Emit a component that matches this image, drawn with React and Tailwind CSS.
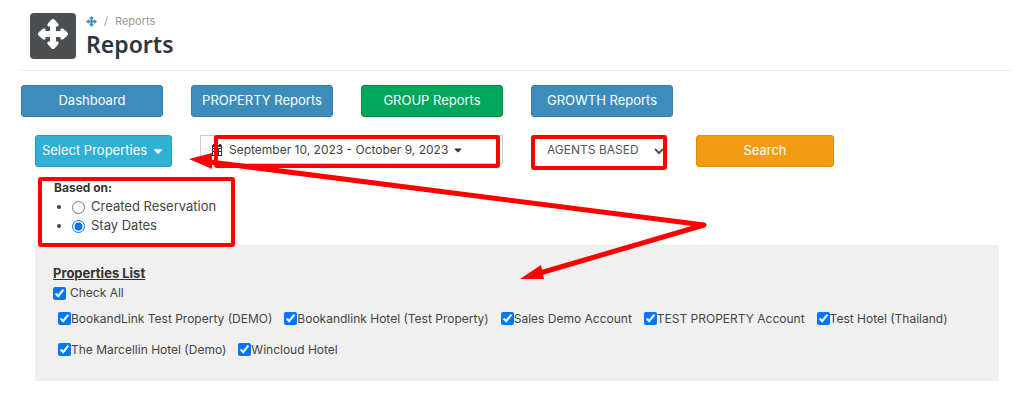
import React, { useState } from "react";
import { FaCaretDown } from "react-icons/fa";

const tabs = [
  { name: "Dashboard" },
  { name: "PROPERTY Reports" },
  { name: "GROUP Reports" },
  { name: "GROWTH Reports" },
];

const properties = [
  "BookandLink Test Property (DEMO)",
  "Bookandlink Hotel (Test Property)",
  "Sales Demo Account",
  "TEST PROPERTY Account",
  "Test Hotel (Thailand)",
  "The Marcellin Hotel (Demo)",
  "Wincloud Hotel",
];

const ArrowsIcon = ({ className }) => (
  <svg
    viewBox="0 0 32 32"
    className={className}
    fill="currentColor"
    stroke="currentColor"
    strokeWidth="1"
    strokeLinejoin="round"
    aria-hidden="true"
  >
    <path d="M15 1.5 H17 L21 6 V8 H18.5 V13.5 H24 V11 H26 L30.5 15 V17 L26 21 H24 V18.5 H18.5 V24 H21 V26 L17 30.5 H15 L11 26 V24 H13.5 V18.5 H8 V21 H6 L1.5 17 V15 L6 11 H8 V13.5 H13.5 V8 H11 V6 Z" />
  </svg>
);

const CalendarIcon = ({ className }) => (
  <svg
    viewBox="0 0 12 12"
    className={className}
    fill="currentColor"
    aria-hidden="true"
  >
    <path
      fillRule="evenodd"
      d="M2 0h2v1h4V0h2v1h1v11H1V1h1zM2 5v2h2V5zM5 5v2h2V5zM8 5v2h2V5zM2 8v3h2V8zM5 8v3h2V8zM8 8v3h2V8zM2 3v1h8V3z"
    />
  </svg>
);

const Header = () => (
  <header className="flex gap-2.5 border-b border-[#e8e8e8] px-[9px] pt-[13px] pb-[11px]">
    <div className="flex size-[46px] items-center justify-center rounded-sm bg-[#4b4f52]">
      <ArrowsIcon className="mb-1 size-8 text-white" />
    </div>
    <div>
      <nav className="flex h-4 items-center text-[11px] text-[#999]">
        <a href="#home" aria-label="Home" className="text-[#3c8dbc]">
          <ArrowsIcon className="size-[11px]" />
        </a>
        <span className="px-[7px]">/</span>
        <span>Reports</span>
      </nav>
      <h1 className="font-['Noto_Sans',sans-serif] text-[23px] leading-[30px] font-semibold text-[#2f353e]">
        Reports
      </h1>
    </div>
  </header>
);

const Annotations = () => (
  <svg
    className="pointer-events-none absolute top-0 left-0"
    width="1024"
    height="407"
    fill="none"
    stroke="#f00"
    strokeWidth="4"
    aria-hidden="true"
  >
    <rect x="216" y="137" width="282" height="29" rx="1" />
    <rect x="533" y="137" width="132" height="31" rx="1" />
    <rect x="40" y="179" width="193" height="66" rx="1" />
    <path
      d="M210 162 L704 225 L540 273"
      strokeWidth="5"
      strokeLinejoin="round"
    />
    <path d="M189 159 L212 153 V169 Z" fill="#f00" stroke="none" />
    <path d="M520 279 L541 265 L544 279 Z" fill="#f00" stroke="none" />
  </svg>
);

const App = () => {
  const [active, setActive] = useState("GROUP Reports");
  const [basedOn, setBasedOn] = useState("stay");
  const [checked, setChecked] = useState(properties);

  const allChecked = checked.length === properties.length;

  const toggle = (name) => {
    setChecked(
      checked.includes(name)
        ? checked.filter((item) => item !== name)
        : [...checked, name]
    );
  };

  return (
    <div className="relative bg-white pr-[11px] pl-[21px] font-[Inter,sans-serif] text-[13px] text-[#444]">
      <Header />

      {/* Report tabs */}
      <div className="mt-3.5 flex flex-wrap gap-7">
        {tabs.map((tab) => (
          <button
            key={tab.name}
            onClick={() => setActive(tab.name)}
            className={`h-8 w-[142px] rounded-[3px] border text-[13px] whitespace-nowrap text-white ${
              active === tab.name
                ? "border-[#008d4c] bg-[#00a65a]"
                : "border-[#367fa9] bg-[#3c8dbc]"
            }`}
          >
            {tab.name}
          </button>
        ))}
      </div>

      {/* Filters */}
      <div className="mt-[18px] flex flex-wrap items-start gap-7 pl-3.5">
        <button className="flex h-8 w-[137px] items-center justify-center gap-1 rounded-[3px] border border-[#269abc] bg-[#31b0d5] text-[13px] whitespace-nowrap text-white">
          Select Properties
          <FaCaretDown className="size-3.5" />
        </button>
        <button className="flex h-[29px] w-[303px] items-center border border-[#ccc] px-2.5 text-xs">
          <CalendarIcon className="size-3 text-[#333]" />
          <span className="pr-1 pl-1.5">
            September 10, 2023 - October 9, 2023
          </span>
          <FaCaretDown className="size-3 text-[#333]" />
        </button>
        <select
          aria-label="Report type"
          className="h-8 w-[137px] border border-[#e5e5e5] bg-white pb-1 pl-[11px] text-xs text-[#555]"
        >
          <option>AGENTS BASED</option>
          <option>DATE BASED</option>
        </select>
        <button className="h-8 w-[138px] rounded-[3px] border border-[#e08e0b] bg-[#f39c12] text-[13px] text-white">
          Search
        </button>
      </div>

      {/* Based on */}
      <fieldset className="mt-3 pl-[33px]">
        <legend className="text-xs leading-[18px] font-bold text-[#333]">
          Based on:
        </legend>
        <ul className="list-disc pl-[18px] leading-[19px]">
          <li>
            <label>
              <input
                type="radio"
                name="basedOn"
                className="mr-1.5 align-middle"
                checked={basedOn === "created"}
                onChange={() => setBasedOn("created")}
              />
              Created Reservation
            </label>
          </li>
          <li>
            <label>
              <input
                type="radio"
                name="basedOn"
                className="mr-1.5 align-middle"
                checked={basedOn === "stay"}
                onChange={() => setBasedOn("stay")}
              />
              Stay Dates
            </label>
          </li>
        </ul>
      </fieldset>

      {/* Properties */}
      <section className="mx-3.5 mt-[10px] bg-[#f0f0f0] px-[18px] pt-[18px] pb-4">
        <h2 className="text-[13px] leading-5 font-bold text-[#333] underline">
          Properties List
        </h2>
        <label className="flex h-5 items-center gap-1 text-xs">
          <input
            type="checkbox"
            checked={allChecked}
            onChange={() => setChecked(allChecked ? [] : properties)}
          />
          Check All
        </label>
        <div className="flex flex-wrap gap-x-3 pl-[5px] text-xs">
          {properties.map((name) => (
            <label key={name} className="flex h-[31px] items-center">
              <input
                type="checkbox"
                checked={checked.includes(name)}
                onChange={() => toggle(name)}
              />
              {name}
            </label>
          ))}
        </div>
      </section>

      <Annotations />
    </div>
  );
};

export default App;
